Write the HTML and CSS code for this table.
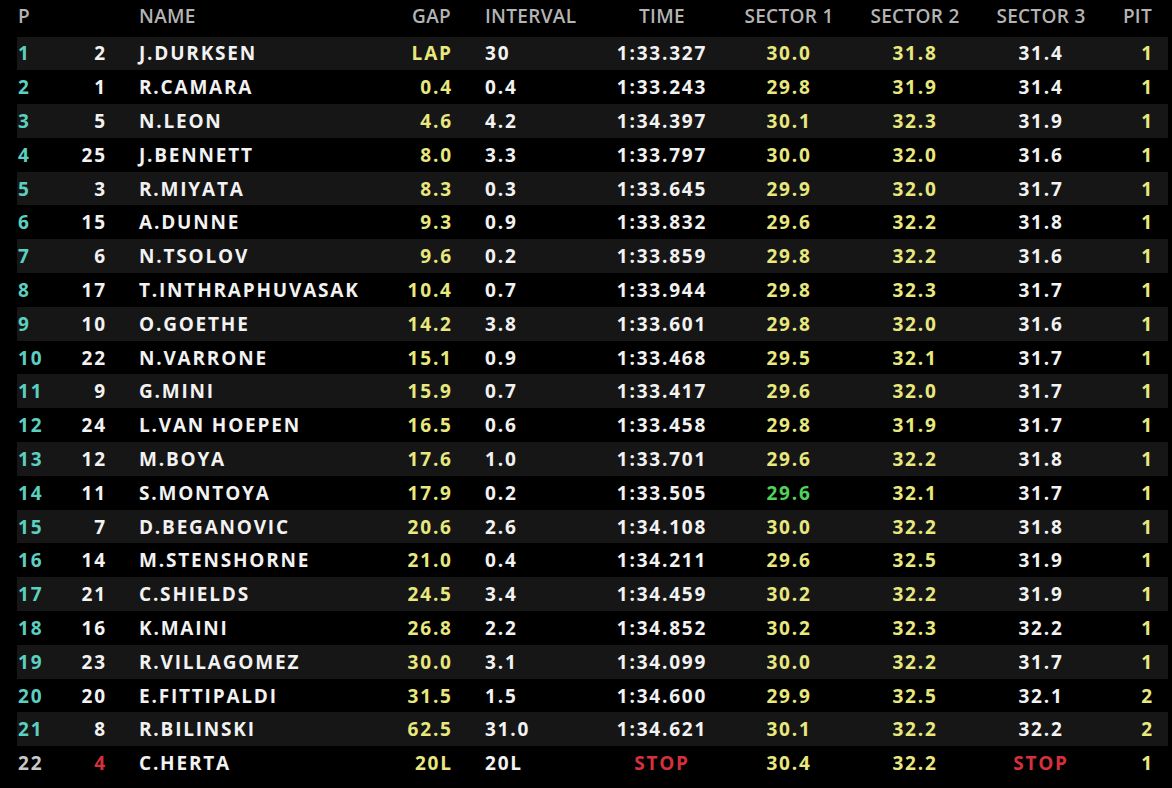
FILE: index.html
```html
<!DOCTYPE html>
<html>
<head>
<meta charset="utf-8">
<link rel="stylesheet" href="styles.css">
</head>
<body>
<div class="board">
  <div class="row head">
    <div class="c-p">P</div><div class="c-num"></div><div class="c-name">NAME</div><div class="c-gap">GAP</div><div class="c-int">INTERVAL</div><div class="c-time">TIME</div><div class="c-s1">SECTOR 1</div><div class="c-s2">SECTOR 2</div><div class="c-s3">SECTOR 3</div><div class="c-pit">PIT</div>
  </div>
  <div class="row alt"><div class="c-p teal">1</div><div class="c-num">2</div><div class="c-name">J.DURKSEN</div><div class="c-gap yel">LAP</div><div class="c-int">30</div><div class="c-time">1:33.327</div><div class="c-s1 yel">30.0</div><div class="c-s2 yel">31.8</div><div class="c-s3">31.4</div><div class="c-pit yel">1</div></div>
  <div class="row"><div class="c-p teal">2</div><div class="c-num">1</div><div class="c-name">R.CAMARA</div><div class="c-gap yel">0.4</div><div class="c-int">0.4</div><div class="c-time">1:33.243</div><div class="c-s1 yel">29.8</div><div class="c-s2 yel">31.9</div><div class="c-s3">31.4</div><div class="c-pit yel">1</div></div>
  <div class="row alt"><div class="c-p teal">3</div><div class="c-num">5</div><div class="c-name">N.LEON</div><div class="c-gap yel">4.6</div><div class="c-int">4.2</div><div class="c-time">1:34.397</div><div class="c-s1 yel">30.1</div><div class="c-s2 yel">32.3</div><div class="c-s3">31.9</div><div class="c-pit yel">1</div></div>
  <div class="row"><div class="c-p teal">4</div><div class="c-num">25</div><div class="c-name">J.BENNETT</div><div class="c-gap yel">8.0</div><div class="c-int">3.3</div><div class="c-time">1:33.797</div><div class="c-s1 yel">30.0</div><div class="c-s2 yel">32.0</div><div class="c-s3">31.6</div><div class="c-pit yel">1</div></div>
  <div class="row alt"><div class="c-p teal">5</div><div class="c-num">3</div><div class="c-name">R.MIYATA</div><div class="c-gap yel">8.3</div><div class="c-int">0.3</div><div class="c-time">1:33.645</div><div class="c-s1 yel">29.9</div><div class="c-s2 yel">32.0</div><div class="c-s3">31.7</div><div class="c-pit yel">1</div></div>
  <div class="row"><div class="c-p teal">6</div><div class="c-num">15</div><div class="c-name">A.DUNNE</div><div class="c-gap yel">9.3</div><div class="c-int">0.9</div><div class="c-time">1:33.832</div><div class="c-s1 yel">29.6</div><div class="c-s2 yel">32.2</div><div class="c-s3">31.8</div><div class="c-pit yel">1</div></div>
  <div class="row alt"><div class="c-p teal">7</div><div class="c-num">6</div><div class="c-name">N.TSOLOV</div><div class="c-gap yel">9.6</div><div class="c-int">0.2</div><div class="c-time">1:33.859</div><div class="c-s1 yel">29.8</div><div class="c-s2 yel">32.2</div><div class="c-s3">31.6</div><div class="c-pit yel">1</div></div>
  <div class="row"><div class="c-p teal">8</div><div class="c-num">17</div><div class="c-name">T.INTHRAPHUVASAK</div><div class="c-gap yel">10.4</div><div class="c-int">0.7</div><div class="c-time">1:33.944</div><div class="c-s1 yel">29.8</div><div class="c-s2 yel">32.3</div><div class="c-s3">31.7</div><div class="c-pit yel">1</div></div>
  <div class="row alt"><div class="c-p teal">9</div><div class="c-num">10</div><div class="c-name">O.GOETHE</div><div class="c-gap yel">14.2</div><div class="c-int">3.8</div><div class="c-time">1:33.601</div><div class="c-s1 yel">29.8</div><div class="c-s2 yel">32.0</div><div class="c-s3">31.6</div><div class="c-pit yel">1</div></div>
  <div class="row"><div class="c-p teal">10</div><div class="c-num">22</div><div class="c-name">N.VARRONE</div><div class="c-gap yel">15.1</div><div class="c-int">0.9</div><div class="c-time">1:33.468</div><div class="c-s1 yel">29.5</div><div class="c-s2 yel">32.1</div><div class="c-s3">31.7</div><div class="c-pit yel">1</div></div>
  <div class="row alt"><div class="c-p teal">11</div><div class="c-num">9</div><div class="c-name">G.MINI</div><div class="c-gap yel">15.9</div><div class="c-int">0.7</div><div class="c-time">1:33.417</div><div class="c-s1 yel">29.6</div><div class="c-s2 yel">32.0</div><div class="c-s3">31.7</div><div class="c-pit yel">1</div></div>
  <div class="row"><div class="c-p teal">12</div><div class="c-num">24</div><div class="c-name">L.VAN HOEPEN</div><div class="c-gap yel">16.5</div><div class="c-int">0.6</div><div class="c-time">1:33.458</div><div class="c-s1 yel">29.8</div><div class="c-s2 yel">31.9</div><div class="c-s3">31.7</div><div class="c-pit yel">1</div></div>
  <div class="row alt"><div class="c-p teal">13</div><div class="c-num">12</div><div class="c-name">M.BOYA</div><div class="c-gap yel">17.6</div><div class="c-int">1.0</div><div class="c-time">1:33.701</div><div class="c-s1 yel">29.6</div><div class="c-s2 yel">32.2</div><div class="c-s3">31.8</div><div class="c-pit yel">1</div></div>
  <div class="row"><div class="c-p teal">14</div><div class="c-num">11</div><div class="c-name">S.MONTOYA</div><div class="c-gap yel">17.9</div><div class="c-int">0.2</div><div class="c-time">1:33.505</div><div class="c-s1 grn">29.6</div><div class="c-s2 yel">32.1</div><div class="c-s3">31.7</div><div class="c-pit yel">1</div></div>
  <div class="row alt"><div class="c-p teal">15</div><div class="c-num">7</div><div class="c-name">D.BEGANOVIC</div><div class="c-gap yel">20.6</div><div class="c-int">2.6</div><div class="c-time">1:34.108</div><div class="c-s1 yel">30.0</div><div class="c-s2 yel">32.2</div><div class="c-s3">31.8</div><div class="c-pit yel">1</div></div>
  <div class="row"><div class="c-p teal">16</div><div class="c-num">14</div><div class="c-name">M.STENSHORNE</div><div class="c-gap yel">21.0</div><div class="c-int">0.4</div><div class="c-time">1:34.211</div><div class="c-s1 yel">29.6</div><div class="c-s2 yel">32.5</div><div class="c-s3">31.9</div><div class="c-pit yel">1</div></div>
  <div class="row alt"><div class="c-p teal">17</div><div class="c-num">21</div><div class="c-name">C.SHIELDS</div><div class="c-gap yel">24.5</div><div class="c-int">3.4</div><div class="c-time">1:34.459</div><div class="c-s1 yel">30.2</div><div class="c-s2 yel">32.2</div><div class="c-s3">31.9</div><div class="c-pit yel">1</div></div>
  <div class="row"><div class="c-p teal">18</div><div class="c-num">16</div><div class="c-name">K.MAINI</div><div class="c-gap yel">26.8</div><div class="c-int">2.2</div><div class="c-time">1:34.852</div><div class="c-s1 yel">30.2</div><div class="c-s2 yel">32.3</div><div class="c-s3">32.2</div><div class="c-pit yel">1</div></div>
  <div class="row alt"><div class="c-p teal">19</div><div class="c-num">23</div><div class="c-name">R.VILLAGOMEZ</div><div class="c-gap yel">30.0</div><div class="c-int">3.1</div><div class="c-time">1:34.099</div><div class="c-s1 yel">30.0</div><div class="c-s2 yel">32.2</div><div class="c-s3">31.7</div><div class="c-pit yel">1</div></div>
  <div class="row"><div class="c-p teal">20</div><div class="c-num">20</div><div class="c-name">E.FITTIPALDI</div><div class="c-gap yel">31.5</div><div class="c-int">1.5</div><div class="c-time">1:34.600</div><div class="c-s1 yel">29.9</div><div class="c-s2 yel">32.5</div><div class="c-s3">32.1</div><div class="c-pit yel">2</div></div>
  <div class="row alt"><div class="c-p teal">21</div><div class="c-num">8</div><div class="c-name">R.BILINSKI</div><div class="c-gap yel">62.5</div><div class="c-int">31.0</div><div class="c-time">1:34.621</div><div class="c-s1 yel">30.1</div><div class="c-s2 yel">32.2</div><div class="c-s3">32.2</div><div class="c-pit yel">2</div></div>
  <div class="row"><div class="c-p gray">22</div><div class="c-num red">4</div><div class="c-name">C.HERTA</div><div class="c-gap yel">20L</div><div class="c-int">20L</div><div class="c-time red">STOP</div><div class="c-s1 yel">30.4</div><div class="c-s2 yel">32.2</div><div class="c-s3 red">STOP</div><div class="c-pit yel">1</div></div>
</div>
</body>
</html>
```

FILE: styles.css
```css
html, body {
  margin: 0;
  padding: 0;
  background: #000;
}
body {
  font-family: "Open Sans", "DejaVu Sans", sans-serif;
  font-weight: 700;
  font-size: 19px;
  color: #f2f2f2;
  letter-spacing: 1.8px;
}
.board {
  padding: 0 4px 0 17px;
  display: flex;
  flex-direction: column;
}
.row {
  display: grid;
  grid-template-columns: 43px 45px 295px 51px 139px 144px 110px 142px 110px 56px;
  align-items: center;
  height: 33.8px;
  white-space: nowrap;
}
.row.head {
  height: 31px;
  margin-bottom: 5.5px;
  color: #b4b4b4;
  font-weight: 600;
  font-size: 19px;
  letter-spacing: 0.3px;
}
.row.alt {
  background: #161616;
}
.c-p { padding-left: 1px; }
.c-num { text-align: right; margin-right: -1.8px; }
.c-name { padding-left: 34px; }
.c-gap { text-align: right; margin-right: -1.8px; }
.c-int { padding-left: 34px; }
.c-time, .c-s1, .c-s2, .c-s3 { text-align: center; }
.c-pit { text-align: right; margin-right: -1.8px; }
.head .c-num, .head .c-gap, .head .c-pit { margin-right: 0; }
.teal { color: #5ccfc0; }
.yel { color: #e8e87e; }
.grn { color: #4fd35a; }
.red { color: #d5303c; }
.gray { color: #c8c8c8; }
```
